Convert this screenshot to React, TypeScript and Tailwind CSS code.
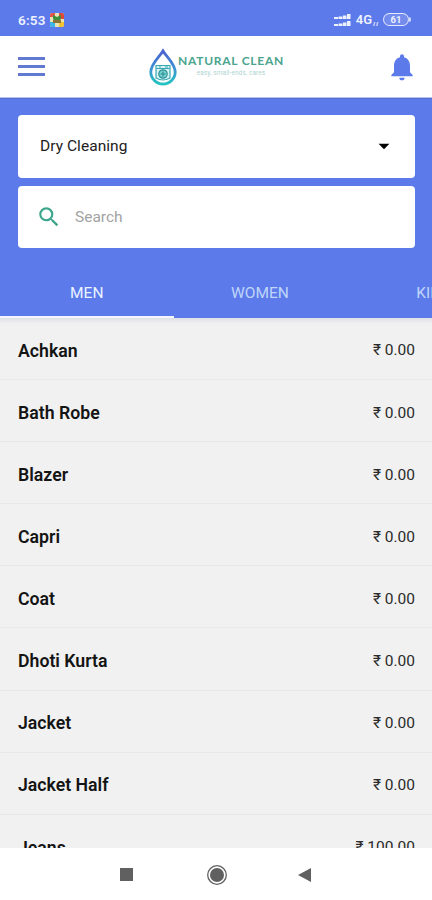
import React from 'react';
import { MdNotifications, MdSearch, MdArrowDropDown } from 'react-icons/md';

const items = [
  { name: 'Achkan', price: '0.00' },
  { name: 'Bath Robe', price: '0.00' },
  { name: 'Blazer', price: '0.00' },
  { name: 'Capri', price: '0.00' },
  { name: 'Coat', price: '0.00' },
  { name: 'Dhoti Kurta', price: '0.00' },
  { name: 'Jacket', price: '0.00' },
  { name: 'Jacket Half', price: '0.00' },
  { name: 'Jeans', price: '100.00' },
];

function StatusBar() {
  return (
    <div className="flex h-9 shrink-0 items-center justify-between bg-[#5c7aea] pl-[18px] pr-[21px] pt-[3px] text-[#eef2ff]">
      <div className="flex items-center gap-[3px]">
        <span className="text-[13.5px] font-semibold leading-4 tracking-[0.2px]">6:53</span>
        <svg width="16" height="16" viewBox="0 0 16 16">
          <rect x="1" y="1" width="14" height="14" rx="2" fill="#e9e3b8" />
          <path d="M1 3a2 2 0 0 1 2-2h3v4H1z" fill="#e1574c" />
          <path d="M10 1h3a2 2 0 0 1 2 2v4h-5z" fill="#dd4a35" />
          <path d="M1 10h5v5H3a2 2 0 0 1-2-2z" fill="#3bb6e6" />
          <path d="M10 10h5v3a2 2 0 0 1-2 2h-3z" fill="#f2c230" />
          <path d="M4 3l4 2 4-2v4l-2 2H6L4 7z" fill="#3f8f3f" />
          <path d="M4 8h8v3H4z" fill="#8a7431" />
        </svg>
      </div>
      <div className="flex items-center">
        <svg width="18" height="14" viewBox="0 0 18 14" fill="currentColor">
          <path d="M0 4h4v2H0zM4.500 3.500h4V6h-4zM9 2.500h3.500V6H9zM13 1h3.500v5H13z" />
          <path d="M0 11h4v2H0zM4.500 10.500h4V13h-4zM9 9.500h3.500V13H9zM13 8h3.500v5H13z" />
        </svg>
        <span className="ml-[4px] text-[13px] font-semibold leading-4">4G</span>
        <svg className="ml-px mt-[7px]" width="6" height="5" viewBox="0 0 6 5" fill="currentColor" opacity=".7">
          <path d="M0 5l1-4h1.500L1.500 5zM3 5l1-4h1.500l-1 4z" />
        </svg>
        <div className="ml-[4px] flex h-[13px] w-[26px] items-center justify-center rounded-full border-[1.5px] border-white/80 bg-white/15 text-[9.5px] font-bold leading-none">
          61
        </div>
        <div className="h-[5px] w-[2px] rounded-r bg-white/70" />
      </div>
    </div>
  );
}

function Logo() {
  return (
    <div className="flex items-center">
      <svg width="30" height="38" viewBox="0 0 30 38" fill="none">
        <defs>
          <linearGradient id="drop" x1="0" y1="0" x2="0" y2="1">
            <stop offset="0" stopColor="#4a61cf" />
            <stop offset=".5" stopColor="#3f8fd2" />
            <stop offset="1" stopColor="#25c3c1" />
          </linearGradient>
        </defs>
        <path
          d="M15 3C11.500 9 2.800 16 2.800 24a12.200 12 0 0 0 24.400 0C27.200 16 18.500 9 15 3z"
          stroke="url(#drop)"
          strokeWidth="2.800"
        />
        <path d="M8 17.500h14V30q-7 4-14 0z" fill="#d8f3f3" stroke="#3aa9b5" strokeWidth="1.200" />
        <path d="M8.500 20.500h13M11 19h2M17 19h3" stroke="#3aa9b5" />
        <circle cx="15" cy="26" r="4.200" fill="#79d1ce" stroke="#2d8f98" strokeWidth="1.200" />
        <path d="M12.500 26h5M15 23.500v5" stroke="#2d8f98" strokeWidth="1.200" />
      </svg>
      <div className="flex w-[107px] flex-col items-center pb-[3px]">
        <span className="whitespace-nowrap font-['Lato','Roboto',sans-serif] text-[12px] font-bold leading-[13px] tracking-[0.75px] text-[#4aa48e]">
          NATURAL CLEAN
        </span>
        <span className="mt-[2px] whitespace-nowrap text-[6.5px] leading-[8px] tracking-[0.1px] text-[#b0d5d0]">
          easy, small-ends, cares
        </span>
      </div>
    </div>
  );
}

function Header() {
  return (
    <div className="flex h-[62px] shrink-0 items-center justify-between border-b border-[#b8c4f2] bg-white pl-[18px] pr-[14px]">
      <div className="flex w-[27px] flex-col gap-[5px]">
        <div className="h-[3px] bg-[#6279d2]" />
        <div className="h-[3px] bg-[#6279d2]" />
        <div className="h-[3px] bg-[#6279d2]" />
      </div>
      <div className="-mr-px">
        <Logo />
      </div>
      <MdNotifications className="h-8 w-8 text-[#5c7aea]" />
    </div>
  );
}

function Filters() {
  return (
    <div className="flex shrink-0 flex-col gap-2 border-t border-[#526fcb] bg-[#5c7aea] pl-[18px] pr-[17px] pt-4">
      <div className="flex h-[62.5px] items-center justify-between rounded bg-white pl-[22px] pr-[18px]">
        <span className="pt-px text-[15.5px] tracking-[0.05px] text-[#222]">Dry Cleaning</span>
        <MdArrowDropDown className="h-[26px] w-[26px] text-black" />
      </div>
      <div className="flex h-[62.5px] items-center rounded bg-white pl-[18px]">
        <MdSearch className="h-[26px] w-[26px] text-[#3da58c]" />
        <span className="ml-[13px] pt-[2px] text-[15.5px] text-[#a3a3a3]">Search</span>
      </div>
    </div>
  );
}

function Tabs() {
  return (
    <div className="flex h-[70px] shrink-0 overflow-hidden bg-[#5c7aea] pt-6 text-[15.5px]">
      <div className="flex w-[173.5px] shrink-0 items-center justify-center border-b-2 border-[#f4f6ff] text-[#eaf3ff]">
        MEN
      </div>
      <div className="flex w-[173px] shrink-0 items-center justify-center border-b-2 border-transparent text-[#bfd6f8]">
        WOMEN
      </div>
      <div className="flex w-[173px] shrink-0 items-center justify-center border-b-2 border-transparent text-[#bfd6f8]">
        KIDS
      </div>
    </div>
  );
}

function NavBar() {
  return (
    <div className="flex h-[52px] shrink-0 items-center bg-white pl-[120px] pt-px text-[#606060]">
      <div className="h-[13px] w-[13px] bg-current" />
      <svg className="ml-[73px]" width="22" height="22" viewBox="0 0 22 22">
        <circle cx="11" cy="11" r="9.300" fill="none" stroke="currentColor" strokeWidth="1.300" />
        <circle cx="11" cy="11" r="7" fill="currentColor" />
      </svg>
      <svg className="ml-[70px]" width="14" height="16" viewBox="0 0 14 16">
        <path d="M0 8L13 1v14z" fill="currentColor" />
      </svg>
    </div>
  );
}

export default function App() {
  return (
    <div className="flex h-[900px] w-[432px] flex-col overflow-hidden bg-[#f1f1f1] font-['Roboto',sans-serif]">
      <StatusBar />
      <Header />
      <Filters />
      <Tabs />
      <div className="min-h-0 flex-1 overflow-hidden bg-linear-to-b from-[#e0e1e6] to-[#f1f1f1] to-[6px]">
        {items.map((item) => (
          <div
            key={item.name}
            className="flex h-[62.1px] items-center justify-between border-b border-[#e8e8e8] pl-[18px] pr-[17px] pt-[5px]"
          >
            <span className="text-[17.7px] font-semibold text-[#141414]">{item.name}</span>
            <span className="text-[15.5px] text-[#2a2a2a]">₹ {item.price}</span>
          </div>
        ))}
      </div>
      <NavBar />
    </div>
  );
}
